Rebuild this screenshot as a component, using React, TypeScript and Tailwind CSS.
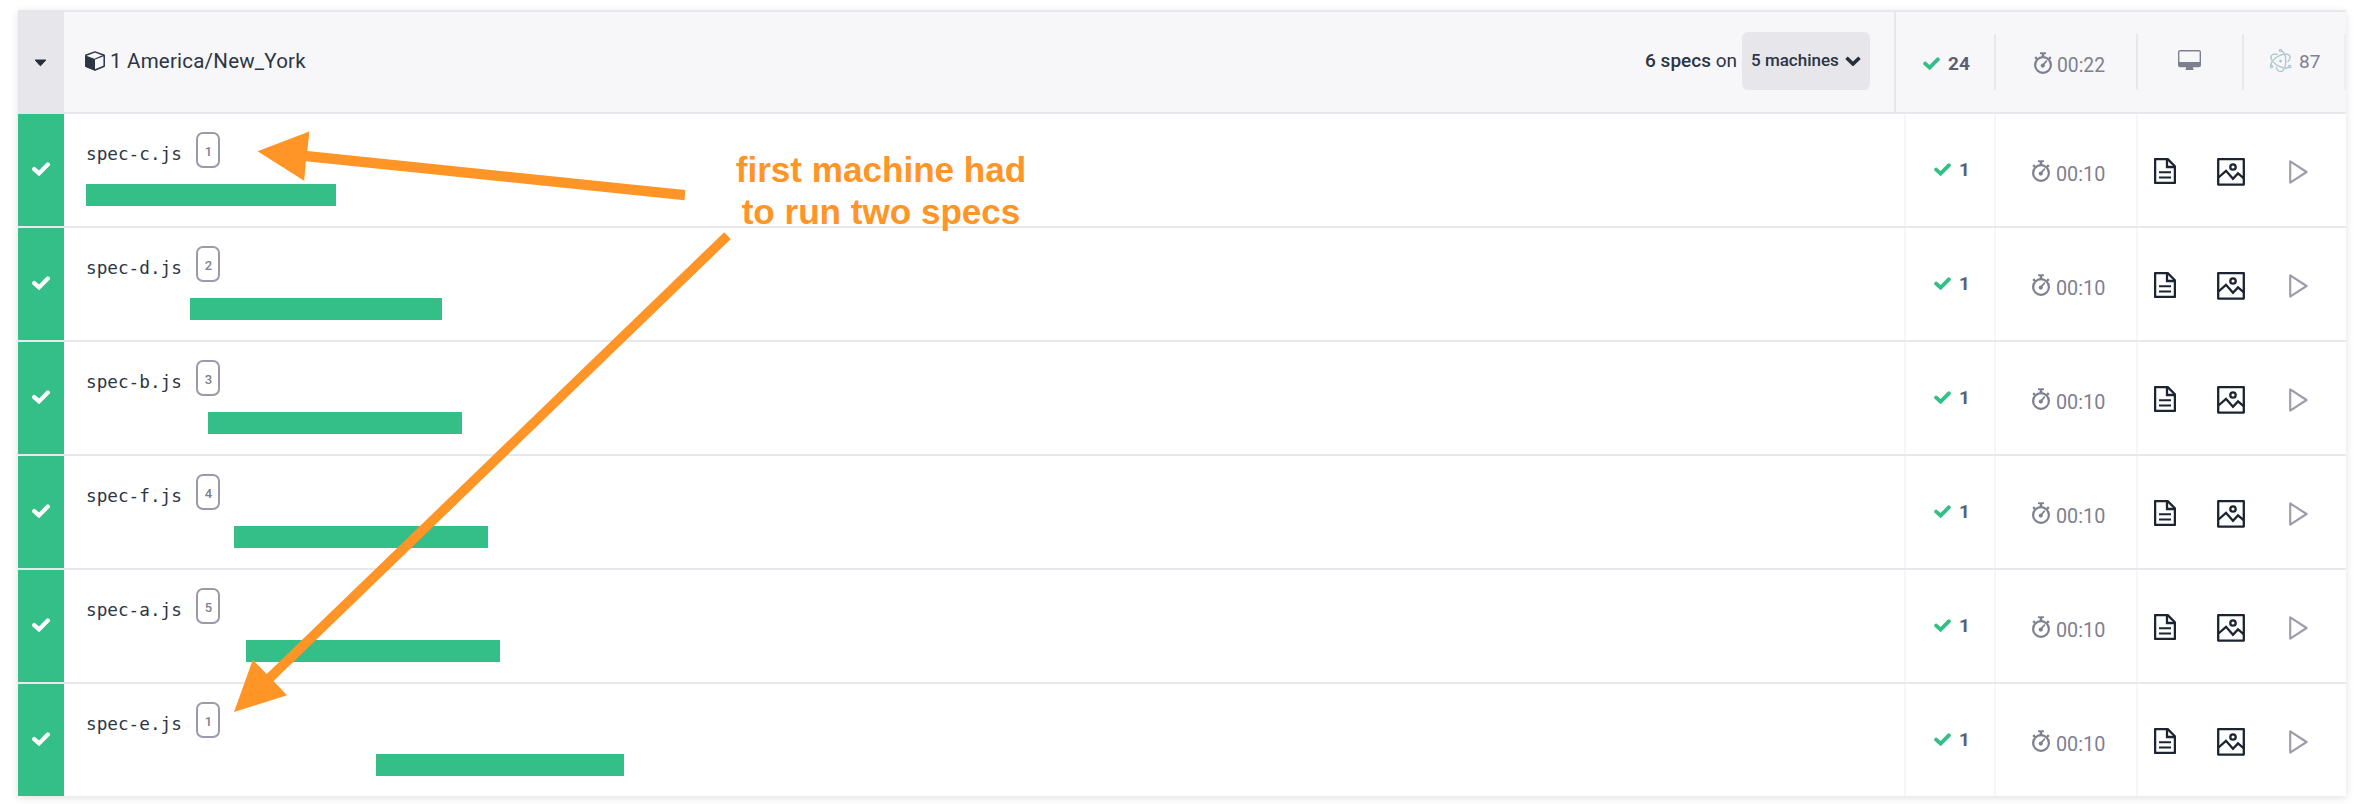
import React from "react";
import { SiElectron } from "react-icons/si";

type Spec = { name: string; machine: number; start: number; width: number };

const specs: Spec[] = [
  { name: "spec-c.js", machine: 1, start: 0, width: 250 },
  { name: "spec-d.js", machine: 2, start: 104, width: 252 },
  { name: "spec-b.js", machine: 3, start: 122, width: 254 },
  { name: "spec-f.js", machine: 4, start: 148, width: 254 },
  { name: "spec-a.js", machine: 5, start: 160, width: 254 },
  { name: "spec-e.js", machine: 1, start: 290, width: 248 },
];

function Check({ className = "" }: { className?: string }) {
  return (
    <svg viewBox="0 0 18 14" className={`shrink-0 ${className}`} fill="none" stroke="currentColor">
      <path d="M2.2 7.1 7 11.4 15.8 2.6" strokeWidth="4.2" strokeLinecap="round" strokeLinejoin="miter" />
    </svg>
  );
}

function Stopwatch({ className = "" }: { className?: string }) {
  return (
    <svg viewBox="0 0 18 22" className={`h-[22px] w-[18px] shrink-0 ${className}`} fill="none" stroke="currentColor">
      <circle cx="9" cy="13" r="7.9" strokeWidth="2.2" />
      <path d="M6 1.2h6" strokeWidth="1.8" />
      <path d="M9 1v4" strokeWidth="2.6" />
      <path d="M1.2 5.2 3 7M16.8 5.2 15 7" strokeWidth="2.4" />
      <path d="M9 13l3.4-3.8" strokeWidth="1.8" strokeLinecap="round" />
      <circle cx="8.8" cy="13.6" r="2.1" fill="currentColor" stroke="none" />
    </svg>
  );
}

function Cube({ className = "" }: { className?: string }) {
  return (
    <svg viewBox="0 0 20 20" className={`h-5 w-5 shrink-0 ${className}`}>
      <path d="M10 .9 19.2 4.2v11L10 19 .8 15.2v-11z" fill="none" stroke="currentColor" strokeWidth="1.5" strokeLinejoin="round" />
      <path d="M.6 4.4 10 8v11.4L.6 15.6z" fill="currentColor" />
      <path d="M10 8l9-3.6" stroke="currentColor" strokeWidth="1.3" />
    </svg>
  );
}

function Monitor({ className = "" }: { className?: string }) {
  return (
    <svg viewBox="0 0 23 20" className={`h-5 w-[23px] shrink-0 ${className}`} fill="currentColor">
      <path fillRule="evenodd" d="M2 0h19a2 2 0 0 1 2 2v13.2a2 2 0 0 1-2 2h-6v1.4l.5.5v.9h-8v-.9l.5-.5v-1.4H2a2 2 0 0 1-2-2V2a2 2 0 0 1 2-2zm-.6 1.5V12h20.2V1.5z" />
    </svg>
  );
}

function DocIcon({ className = "" }: { className?: string }) {
  return (
    <svg viewBox="0 0 22 26" className={`h-[26px] w-[22px] shrink-0 ${className}`} fill="none" stroke="currentColor" strokeWidth="2.3">
      <path d="M1.1 1.1h12.6l7.2 7.2v16.6H1.1z" strokeLinejoin="round" />
      <path d="M13 1v8h8" />
      <path d="M5 14.3h12M5 19.5h12" strokeWidth="2" />
    </svg>
  );
}

function ImageIcon({ className = "" }: { className?: string }) {
  return (
    <svg viewBox="0 0 28 28" className={`size-7 shrink-0 ${className}`} fill="none" stroke="currentColor" strokeWidth="2.3">
      <path d="M1.2 1.2h25.6v25.4H1.2z" strokeLinejoin="round" />
      <circle cx="16" cy="9" r="2.7" />
      <path d="M1.5 19.5 9 12.8l7 8 5-5.4 5.6 4.8" />
    </svg>
  );
}

function PlayIcon({ className = "" }: { className?: string }) {
  return (
    <svg viewBox="0 0 19 24" className={`h-6 w-[19px] shrink-0 ${className}`} fill="none" stroke="currentColor" strokeWidth="2.1">
      <path d="M1.2 1.4v21.2L17.6 12z" strokeLinejoin="round" />
    </svg>
  );
}

function Header() {
  return (
    <div className="flex h-[104px] items-stretch border-y-2 border-[#e8e8ec] bg-[#f7f7fa] text-[#2b3544]">
      <div className="-my-0.5 flex w-[46px] shrink-0 items-start bg-[#e7e6eb]">
        <svg viewBox="0 0 13 8" className="mt-[49px] ml-4 h-2 w-[13px]">
          <path d="M1.2 1h10.6L6.9 6.4a.7.7 0 0 1-1 0z" fill="#25303c" stroke="#25303c" strokeLinejoin="round" />
        </svg>
      </div>
      <div className="flex grow items-start">
        <Cube className="mt-[39px] ml-[21px]" />
        <span className="mt-[39px] ml-[5px] text-[20.5px] leading-5 tracking-[0.22px] whitespace-nowrap">1 America/New_York</span>
        <span className="mt-[39px] ml-auto text-[19px] leading-5 whitespace-nowrap">
          <b className="font-medium">6 specs</b> on
        </span>
        <button className="mt-5 mr-6 ml-[5px] flex h-[58px] w-32 items-start rounded-md bg-[#e7e6eb]">
          <span className="mt-[18px] ml-[9px] w-[91px] text-left text-[17px] leading-5 font-medium whitespace-nowrap">5 machines</span>
          <svg viewBox="0 0 16 10" className="mt-6 ml-[3px] h-[10px] w-4" fill="none" stroke="#25303c" strokeWidth="3.6">
            <path d="M1.5 1.8 8 8l6.5-6.2" />
          </svg>
        </button>
      </div>
      <div className="flex shrink-0 items-start border-l-2 border-[#e8e8ec] text-[#7e8090]">
        <div className="mt-[22px] flex h-14 w-[100px] items-start border-r-2 border-[#e8e8ec]">
          <Check className="mt-[23px] ml-[27px] h-[13px] w-[17px] text-[#34be88]" />
          <span className="mt-5 ml-2 text-[19px] leading-5 font-bold text-[#5a5f73]">24</span>
        </div>
        <div className="mt-[22px] flex h-14 w-[142px] items-start border-r-2 border-[#e8e8ec]">
          <Stopwatch className="mt-[18px] ml-[38px]" />
          <span className="mt-[22px] ml-[5px] text-[19.3px] leading-5">00:22</span>
        </div>
        <div className="mt-[22px] flex h-14 w-[106px] items-start border-r-2 border-[#e8e8ec]">
          <Monitor className="mt-4 ml-10" />
        </div>
        <div className="mt-[22px] flex h-14 w-[102px] items-start border-r-2 border-[#efeff2]">
          <SiElectron className="mt-[15px] ml-[25px] size-[23px] shrink-0 stroke-[#9fc2cb] stroke-[0.6] text-[#9fc2cb]" />
          <span className="mt-[18px] ml-[7px] text-[19px] leading-5">87</span>
        </div>
      </div>
    </div>
  );
}

function SpecRow({ spec }: { spec: Spec }) {
  return (
    <div className="flex h-[114px] border-b-2 border-[#e8e8ec] last:h-28 last:border-b-0">
      <div className="flex w-[46px] shrink-0 items-start bg-[#34be88]">
        <Check className="mt-12 ml-[14px] h-[14px] w-[18px] text-white" />
      </div>
      <div className="flex grow flex-col pl-[22px]">
        <div className="flex h-[70px] items-start">
          <span className="mt-[29px] w-[110px] font-['DejaVu_Sans_Mono','Liberation_Mono',monospace] text-[17.7px] leading-[22px] text-[#2b3544]">{spec.name}</span>
          <span className="mt-[18px] flex h-9 w-6 items-center justify-center rounded-[7px] border-2 border-[#9b9aaa] pt-1 pl-px text-[13px] leading-3 font-medium text-[#7e8090]">
            {spec.machine}
          </span>
        </div>
        <div className="h-[22px] bg-[#34be88]" style={{ marginLeft: spec.start, width: spec.width }} />
      </div>
      <div className="flex w-[92px] shrink-0 items-start border-x-2 border-[#f6f6f8]">
        <Check className="mt-[49px] ml-7 h-[13px] w-[17px] text-[#34be88]" />
        <span className="mt-[46px] ml-2 text-[19px] leading-5 font-bold text-[#5a5f73]">1</span>
      </div>
      <div className="flex w-[142px] shrink-0 items-start border-r-2 border-[#f6f6f8] text-[#7e8090]">
        <Stopwatch className="mt-[46px] ml-9" />
        <span className="mt-[51px] ml-[6px] text-[19.8px] leading-5">00:10</span>
      </div>
      <div className="flex w-52 shrink-0 items-start text-[#1b2430]">
        <DocIcon className="mt-11 ml-4" />
        <ImageIcon className="mt-11 ml-[41px]" />
        <PlayIcon className="mt-[46px] ml-11 text-[#9d9cab]" />
      </div>
    </div>
  );
}

function Annotation() {
  return (
    <>
      <svg viewBox="0 0 2354 804" className="pointer-events-none absolute top-0 left-0 h-[804px] w-[2354px]" fill="#ff9427">
        <path d="M257.5 151.3 309.3 131.5 307.3 151 685.3 190 684.5 200.3 305.8 161.3 304.2 180.8z" />
        <path d="M234 712 252.8 659.8 266.7 674 724.2 232.2 730.8 239 273.5 681 287 695.3z" />
      </svg>
      <div className="absolute top-[149px] left-[721px] w-[320px] text-center font-['Liberation_Sans',Arial,sans-serif] text-[35.1px] leading-[42px] font-bold whitespace-nowrap text-[#ff9427]">
        first machine had
        <br />
        to run two specs
      </div>
    </>
  );
}

export default function App() {
  return (
    <div className="relative h-[804px] w-[2354px] overflow-hidden bg-white pt-[10px] pl-[18px] font-['Roboto',sans-serif]">
      <div className="w-[2328px] bg-white shadow-[0_2px_8px_rgba(0,0,0,0.12)]">
        <Header />
        <div>
          {specs.map((spec) => (
            <SpecRow key={spec.name} spec={spec} />
          ))}
        </div>
      </div>
      <Annotation />
    </div>
  );
}
